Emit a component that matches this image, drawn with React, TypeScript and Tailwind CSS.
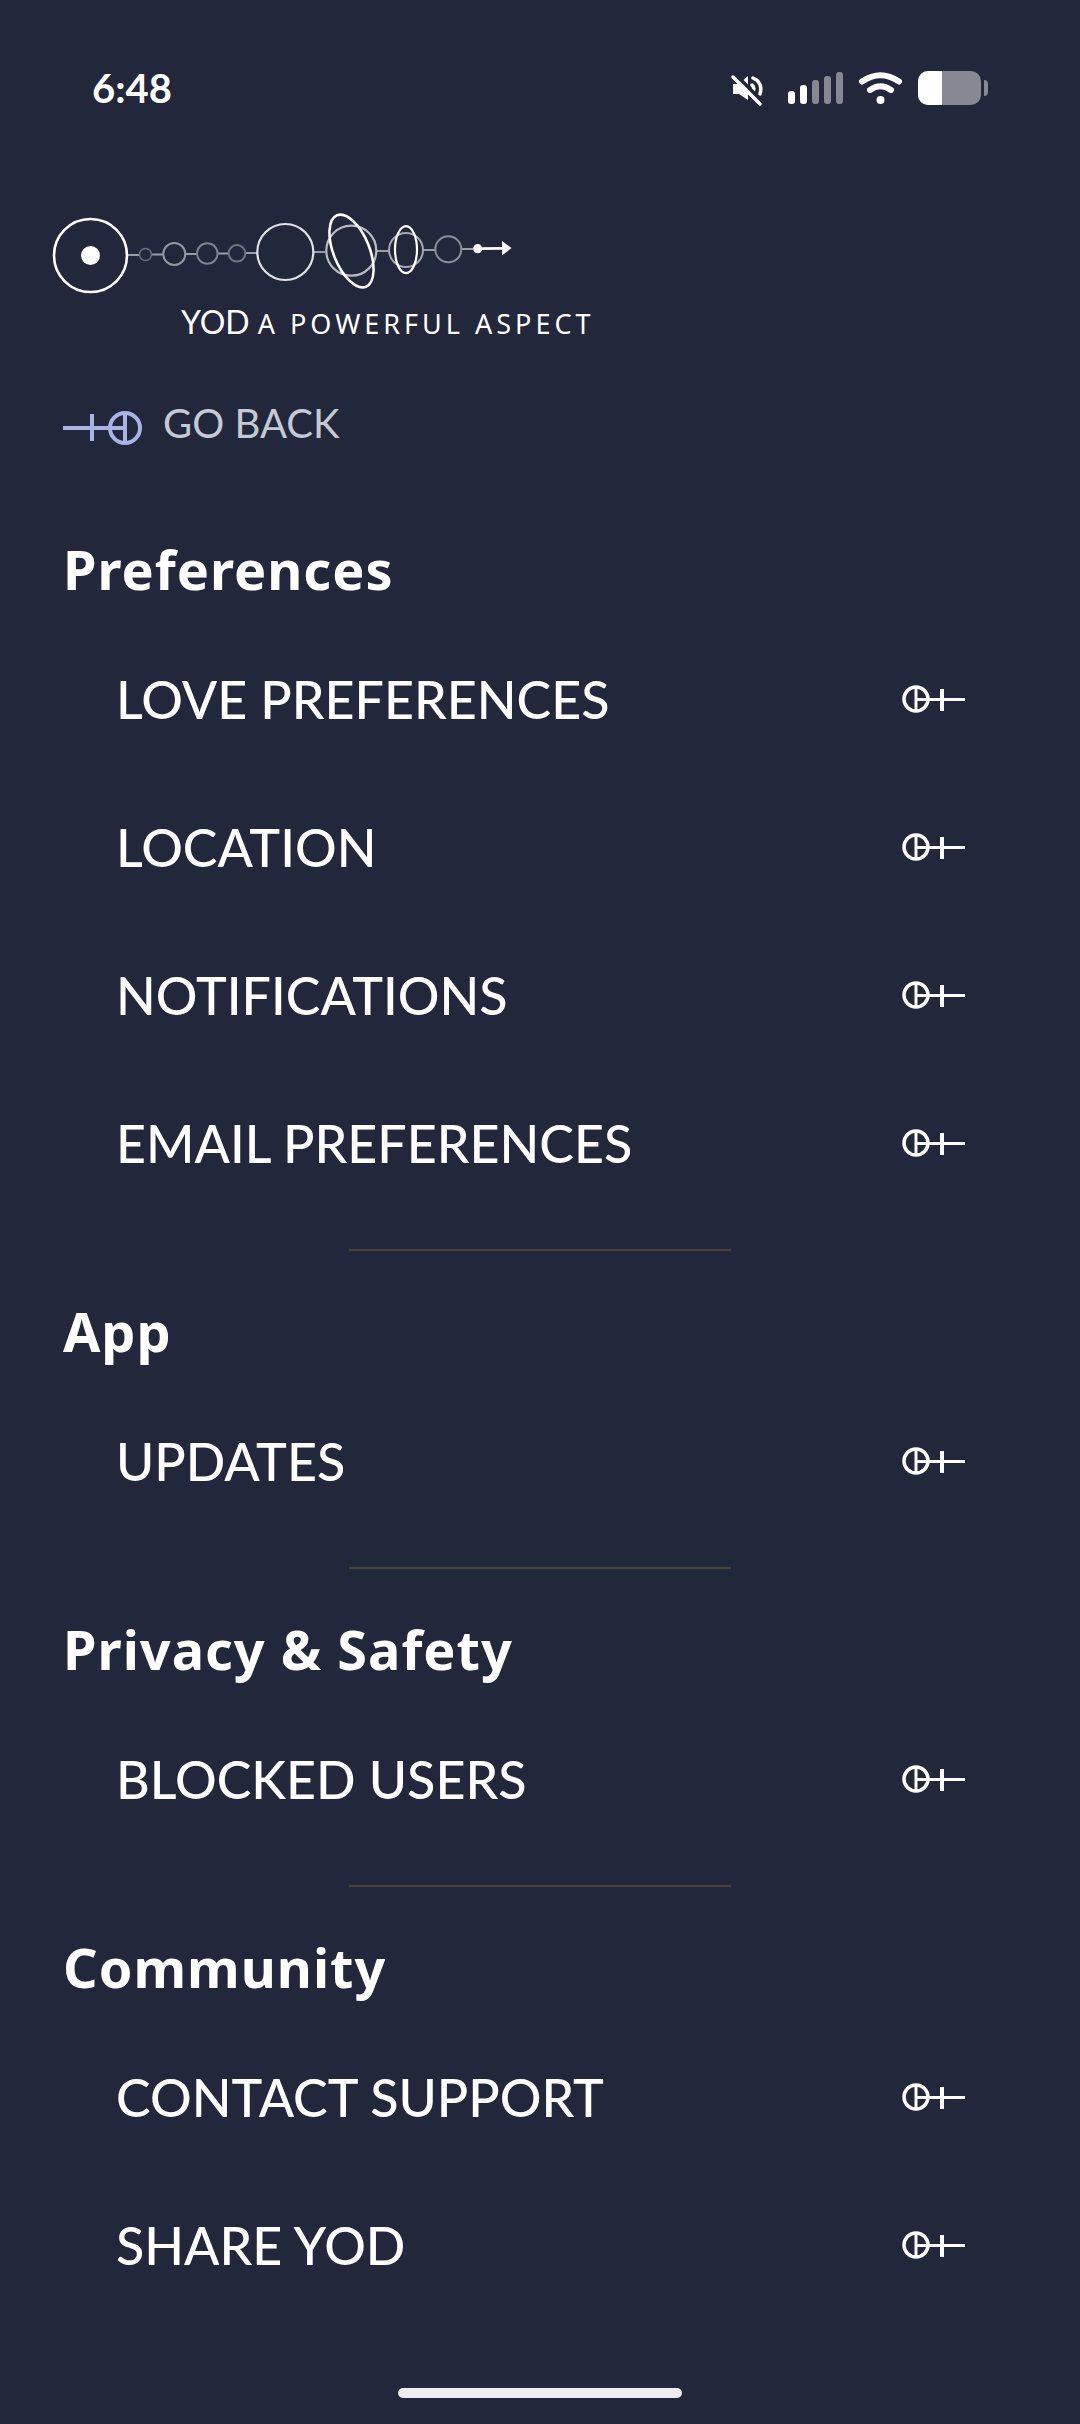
type Section = { title: string; items: string[] };

const sections: Section[] = [
  {
    title: "Preferences",
    items: ["Love Preferences", "Location", "Notifications", "Email Preferences"],
  },
  { title: "App", items: ["Updates"] },
  { title: "Privacy & Safety", items: ["Blocked Users"] },
  { title: "Community", items: ["Contact Support", "Share Yod"] },
];

function StatusIcons() {
  return (
    <svg width="258" height="38" viewBox="730 69 258 38" fill="none" aria-hidden="true">
      <path d="M733 84h6l9-8v24l-9-6h-6z" fill="#fff" />
      <path d="M752 85q3 3 1 6M753 78c7 3 9 9 7 16" stroke="#fff" strokeWidth="3.5" strokeLinecap="round" />
      <path d="M734 73l28 28" stroke="#22273b" strokeWidth="3.5" />
      <path d="M733 77l27 27" stroke="#fff" strokeWidth="3.5" strokeLinecap="round" />
      <g fill="#fff">
        <rect x="788" y="91" width="7" height="13" rx="3" />
        <rect x="800" y="85" width="7" height="19" rx="3" />
      </g>
      <g fill="#868994">
        <rect x="812" y="80" width="7" height="24" rx="3" />
        <rect x="824" y="76" width="7" height="28" rx="3" />
        <rect x="836" y="72" width="7" height="32" rx="3" />
      </g>
      <path
        d="M862 81.500q18.500-12.500 37 0M870 90q10.500-7.500 21 0"
        stroke="#fff"
        strokeWidth="6"
        strokeLinecap="round"
      />
      <circle cx="880.5" cy="100" r="4" fill="#fff" />
      <rect x="918" y="71" width="63" height="34" rx="10" fill="#868994" />
      <path d="M942 71h-14a10 10 0 0 0-10 10v14a10 10 0 0 0 10 10h14z" fill="#fff" />
      <path d="M984 80q4 0 4 4v8q0 4-4 4z" fill="#868994" />
    </svg>
  );
}

function PlanetChain() {
  return (
    <svg width="465" height="84" viewBox="50 210 465 84" fill="none" stroke="#fff" aria-hidden="true">
      <g stroke="#9a9ca8" strokeWidth="2">
        <path d="M128 255h11M152 254.500h11M185 254h12M218 253.500h11M245 253h12M314 252h11M377 251h12M423 250h12M461 249h12" />
      </g>
      <circle cx="90.5" cy="255.500" r="36.500" strokeWidth="2.600" />
      <circle cx="90.5" cy="255.500" r="9.500" fill="#fff" stroke="none" />
      <circle cx="145.500" cy="254.500" r="6" stroke="#686b7a" strokeWidth="1.600" />
      <circle cx="174.300" cy="254" r="11" stroke="#9597a2" strokeWidth="2" />
      <circle cx="207.300" cy="253.500" r="10.300" stroke="#7f828f" strokeWidth="2" />
      <circle cx="237" cy="253.300" r="8.300" stroke="#717482" strokeWidth="2" />
      <circle cx="285.300" cy="252" r="28" stroke="#e2e3e6" strokeWidth="2.200" />
      <circle cx="351.300" cy="250.700" r="25" stroke="#b9bbc2" strokeWidth="2.200" />
      <ellipse cx="351.500" cy="251" rx="18" ry="38.500" transform="rotate(-22 351.500 251)" strokeWidth="2.600" />
      <circle cx="406" cy="250" r="17" stroke="#a5a7b1" strokeWidth="2" />
      <ellipse cx="406" cy="249.700" rx="11" ry="23.500" strokeWidth="2.200" />
      <circle cx="448.300" cy="249.300" r="13" stroke="#8b8e99" strokeWidth="2" />
      <circle cx="477.700" cy="248.700" r="4.600" fill="#fff" stroke="none" />
      <path d="M478 248.700l25-.4" strokeWidth="2.800" />
      <path d="M502 241l9.500 7-9.500 7.500z" fill="#fff" stroke="none" />
    </svg>
  );
}

function BackGlyph() {
  return (
    <svg width="80" height="36" viewBox="0 0 80 36" fill="none" stroke="#aab3e6" strokeWidth="4" aria-hidden="true">
      <circle cx="62" cy="18" r="15" />
      <path d="M0 18h62M29 4v27M62 3v30" />
    </svg>
  );
}

function ForwardGlyph() {
  return (
    <svg width="64" height="28" viewBox="0 0 64 28" fill="none" stroke="#fff" strokeWidth="3" aria-hidden="true">
      <circle cx="14" cy="14" r="12" strokeWidth="3.500" />
      <path d="M14 14.500h49M14 2v24" />
      <path d="M40 4v22" strokeWidth="4" />
    </svg>
  );
}

export default function App() {
  return (
    <div className="flex min-h-screen flex-col bg-[#22273b] font-['Noto_Sans',sans-serif] text-white">
      <header>
        <div className="flex h-44 items-center justify-between px-[92px] font-['Lato',sans-serif] text-[40px] font-bold">
          <span>6:48</span>
          <StatusIcons />
        </div>
        <div className="mt-[34px] pl-[50px]">
          <PlanetChain />
        </div>
        <p className="mt-1.5 flex items-baseline gap-2 pl-[181px] leading-11">
          <span className="font-['Lato',sans-serif] text-[32px]">YOD</span>
          <span className="text-[27px] tracking-[4px]">A POWERFUL ASPECT</span>
        </p>
      </header>

      <button
        type="button"
        className="mt-[54px] flex items-end gap-5 self-start pl-[63px] font-['Lato',sans-serif] text-[40px] leading-[46px] text-[#c3c9d5]"
      >
        <BackGlyph />
        GO BACK
      </button>

      <main className="mt-[87px] grow">
        {sections.map((section, index) => (
          <section key={section.title}>
            {index > 0 && <hr className="mx-auto mt-8 mb-11 w-[382px] border-t-2 border-[#4a4436]" />}
            <h2 className="pl-[63px] text-[54px] leading-[72px] font-bold tracking-[1px]">{section.title}</h2>
            <ul className="mt-5">
              {section.items.map((item) => (
                <li key={item}>
                  <button
                    type="button"
                    className="flex h-[148px] w-full items-center justify-between pr-[114px] pl-[116px] font-['Lato',sans-serif] text-[52px] font-medium uppercase"
                  >
                    {item}
                    <ForwardGlyph />
                  </button>
                </li>
              ))}
            </ul>
          </section>
        ))}
      </main>

      <footer className="flex justify-center pb-[26px]">
        <div className="h-[10px] w-[284px] rounded-full bg-[#eeeef0]" />
      </footer>
    </div>
  );
}
